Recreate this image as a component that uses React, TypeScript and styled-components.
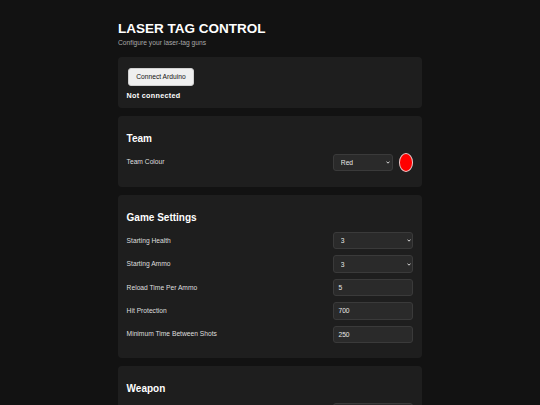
import React, { useState } from 'react';
import styled, { createGlobalStyle } from 'styled-components';

const GlobalStyle = createGlobalStyle`
  html, body {
    margin: 0;
    padding: 0;
    background: #121212;
    color: #e6e6e6;
    font-family: "Liberation Sans", Arial, sans-serif;
  }
`;

const Page = styled.div`
  max-width: 304px;
  margin: 0 auto;
  padding: 21px 0 20px;
`;

const Title = styled.h1`
  margin: 0;
  font-size: 13.5px;
  line-height: 15.4px;
  font-weight: 700;
  color: #ffffff;
`;

const Subtitle = styled.p`
  margin: 2.6px 0 10.2px;
  font-size: 6.7px;
  line-height: 8px;
  color: #a8a8a8;
`;

const Card = styled.section`
  background: #1e1e1e;
  border-radius: 4px;
  padding: 8.7px 8.6px;
  margin-bottom: 8.6px;
`;

const ConnectCard = styled(Card)`
  padding: 10.7px 8.6px 8px;
`;

const ConnectButton = styled.button`
  display: block;
  height: 17.7px;
  margin-left: 1.6px;
  padding: 0 7px;
  border: 1px solid #d0d0d0;
  border-radius: 3px;
  background: #efefef;
  color: #111;
  font-family: inherit;
  font-size: 6.7px;
  cursor: pointer;
`;

const Status = styled.p`
  margin: 6px 0 0;
  font-size: 7.2px;
  line-height: 8px;
  font-weight: 700;
  letter-spacing: 0.3px;
  color: #ffffff;
`;

const SectionTitle = styled.h2`
  margin: 8px 0 8.3px;
  font-size: 10px;
  line-height: 12px;
  font-weight: 700;
  color: #ffffff;
`;

const Row = styled.div`
  display: flex;
  align-items: center;
  justify-content: space-between;
  min-height: 17.4px;
  margin-bottom: 6px;
`;

const Label = styled.label`
  font-size: 6.7px;
  line-height: 8px;
  color: #dedede;
`;

const Controls = styled.div`
  display: flex;
  align-items: center;
  gap: 6.6px;
`;

const SelectWrap = styled.div<{ $width?: number }>`
  position: relative;
  width: ${({ $width }) => $width ?? 80}px;
  height: 17.4px;
`;

const Select = styled.select`
  appearance: none;
  -webkit-appearance: none;
  display: block;
  box-sizing: border-box;
  width: 100%;
  height: 100%;
  margin: 0;
  padding: 0 10px 0 6.4px;
  border: 1px solid #3a3a3a;
  border-radius: 3px;
  background: #2a2a2a;
  color: #e6e6e6;
  font-family: inherit;
  font-size: 6.7px;
  outline: none;
`;

const Chevron = styled.svg`
  position: absolute;
  right: 2.8px;
  top: 50%;
  width: 4px;
  height: 3px;
  margin-top: -1.5px;
  pointer-events: none;
`;

const NumberInput = styled.input`
  box-sizing: border-box;
  width: 80px;
  height: 17.4px;
  margin: 0;
  padding: 0 4px;
  border: 1px solid #3a3a3a;
  border-radius: 3px;
  background: #2a2a2a;
  color: #e6e6e6;
  font-family: inherit;
  font-size: 6.7px;
  outline: none;
`;

const Swatch = styled.span<{ $colour: string }>`
  display: inline-block;
  box-sizing: border-box;
  width: 14px;
  height: 18.7px;
  border-radius: 50%;
  border: 1px solid #e8c8c8;
  background: ${({ $colour }) => $colour};
`;

const teamColours: Record<string, string> = {
  Red: '#ff0000',
  Blue: '#0050ff',
  Green: '#00c000',
  Yellow: '#ffd800',
};

interface DropdownProps {
  value: string;
  options: string[];
  width?: number;
  onChange: (v: string) => void;
}

const Dropdown: React.FC<DropdownProps> = ({ value, options, width, onChange }) => (
  <SelectWrap $width={width}>
    <Select value={value} onChange={(e) => onChange(e.target.value)}>
      {options.map((o) => (
        <option key={o}>{o}</option>
      ))}
    </Select>
    <Chevron viewBox="0 0 4 3">
      <path d="M0.5 0.6 L2 2.2 L3.5 0.6" fill="none" stroke="#e6e6e6" strokeWidth="0.9" />
    </Chevron>
  </SelectWrap>
);

const counts = ['1', '2', '3', '4', '5'];

const App: React.FC = () => {
  const [team, setTeam] = useState('Red');
  const [health, setHealth] = useState('3');
  const [ammo, setAmmo] = useState('3');
  const [weapon, setWeapon] = useState('Pistol');

  return (
    <>
      <GlobalStyle />
      <Page>
        <Title>LASER TAG CONTROL</Title>
        <Subtitle>Configure your laser-tag guns</Subtitle>

        <ConnectCard>
          <ConnectButton>Connect Arduino</ConnectButton>
          <Status>Not connected</Status>
        </ConnectCard>

        <Card>
          <SectionTitle>Team</SectionTitle>
          <Row>
            <Label>Team Colour</Label>
            <Controls>
              <Dropdown width={59.4} value={team} options={Object.keys(teamColours)} onChange={setTeam} />
              <Swatch $colour={teamColours[team]} />
            </Controls>
          </Row>
        </Card>

        <Card>
          <SectionTitle>Game Settings</SectionTitle>
          <Row>
            <Label>Starting Health</Label>
            <Dropdown value={health} options={counts} onChange={setHealth} />
          </Row>
          <Row>
            <Label>Starting Ammo</Label>
            <Dropdown value={ammo} options={counts} onChange={setAmmo} />
          </Row>
          <Row>
            <Label>Reload Time Per Ammo</Label>
            <NumberInput type="text" defaultValue="5" />
          </Row>
          <Row>
            <Label>Hit Protection</Label>
            <NumberInput type="text" defaultValue="700" />
          </Row>
          <Row>
            <Label>Minimum Time Between Shots</Label>
            <NumberInput type="text" defaultValue="250" />
          </Row>
        </Card>

        <Card>
          <SectionTitle>Weapon</SectionTitle>
          <Row>
            <Label>Weapon Type</Label>
            <Dropdown value={weapon} options={['Pistol', 'Rifle', 'Shotgun']} onChange={setWeapon} />
          </Row>
          <Row>
            <Label>Damage</Label>
            <NumberInput type="text" defaultValue="1" />
          </Row>
        </Card>
      </Page>
    </>
  );
};

export default App;
